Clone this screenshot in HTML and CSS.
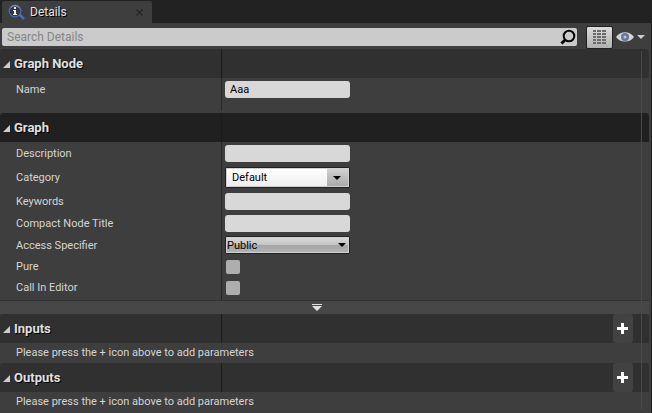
FILE: index.html
```html
<!DOCTYPE html>
<html lang="en">
<head>
  <meta charset="UTF-8">
  <meta name="viewport" content="width=device-width, initial-scale=1.0">
  <title>Details</title>
  <link rel="stylesheet" href="styles.css">
</head>
<body>

  <div class="tab-bar">
    <div class="tab">
      <svg class="tab-icon" width="18" height="18" viewBox="0 0 18 18">
        <path d="M11 11l5 5" stroke="#4a6cb8" stroke-width="2.500"/>
        <circle cx="7" cy="8" r="5.800" fill="#38383a" stroke="#4a6cb8" stroke-width="1.300"/>
        <path d="M2.500 5a5.500 5.500 0 0 1 9 0" fill="none" stroke="#8ea2d0"/>
        <path d="M6 4h2v2H6zM5 7h3v4h1v1H5v-1h1V8H5z" fill="#eee"/>
      </svg>
      <span class="tab-title">Details</span>
      <button class="tab-close" aria-label="Close tab">
        <svg width="7" height="7" viewBox="0 0 7 7"><path d="M.5.500l6 6M6.500.500l-6 6" stroke="#262626" stroke-width="1.300"/></svg>
      </button>
    </div>
  </div>

  <main class="panel">
    <div class="toolbar">
      <div class="search">
        <input type="text" id="search" placeholder="Search Details" aria-label="Search Details">
        <svg width="16" height="16" viewBox="0 0 16 16">
          <circle cx="9" cy="7" r="5.300" fill="none" stroke="#000" stroke-width="2"/>
          <path d="M5.500 10.500L1.500 14.500" stroke="#000" stroke-width="3"/>
        </svg>
      </div>
      <button class="grid-button" aria-label="Property matrix">
        <svg width="13" height="14" viewBox="0 0 13 14">
          <path d="M0 1h13M0 4h13M0 7h13M0 10h13M0 13h13" stroke="#6c6c6c" stroke-width="2" stroke-dasharray="3 1 4 1 4 1"/>
        </svg>
      </button>
      <button class="view-button" aria-label="View options">
        <svg width="30" height="12" viewBox="0 0 30 12">
          <path d="M0 6C4-.5 14-.5 18 6 14 12 4 12 0 6z" fill="#d4d4d4"/>
          <circle cx="9" cy="6" r="4" fill="#667799"/>
          <circle cx="9" cy="6" r="1.500" fill="#bcc8de"/>
          <path d="M21 4h8l-4 4z" fill="#ccc"/>
        </svg>
      </button>
    </div>

    <div class="details">
      <section>
        <h2 class="heading"><svg class="arrow" width="7" height="7"><path d="M7 0v7H0z"/></svg>Graph Node</h2>
        <div class="properties single">
          <div class="row"><label for="name">Name</label><input class="text" type="text" id="name" value="Aaa"></div>
        </div>
      </section>

      <section>
        <h2 class="heading dark"><svg class="arrow" width="7" height="7"><path d="M7 0v7H0z"/></svg>Graph</h2>
        <div class="properties">
          <div class="row"><label for="description">Description</label><input class="text" type="text" id="description"></div>
          <div class="row tall"><label for="category">Category</label>
            <div class="select combo">
              <select id="category"><option>Default</option></select>
              <svg width="8" height="4"><path d="M0 0h8L4 4z"/></svg>
            </div>
          </div>
          <div class="row"><label for="keywords">Keywords</label><input class="text" type="text" id="keywords"></div>
          <div class="row short"><label for="compact">Compact Node Title</label><input class="text" type="text" id="compact"></div>
          <div class="row medium"><label for="access">Access Specifier</label>
            <div class="select">
              <select id="access"><option>Public</option></select>
              <svg width="8" height="4"><path d="M0 0h8L4 4z"/></svg>
            </div>
          </div>
          <div class="row short check"><label for="pure">Pure</label><input type="checkbox" id="pure"></div>
          <div class="row short check"><label for="call">Call In Editor</label><input type="checkbox" id="call"></div>
        </div>
        <button class="advanced" aria-label="Show advanced">
          <svg width="10" height="7"><path d="M0 0h10v1H0zM0 2h10L5 7z" fill="#e0e0e0"/></svg>
        </button>
      </section>

      <section>
        <h2 class="heading"><svg class="arrow" width="7" height="7"><path d="M7 0v7H0z"/></svg>Inputs
          <button class="add" aria-label="Add input"><svg width="12" height="11"><path d="M4 0h3v4h4v3H7v4H4V7H0V4h4z" fill="#fff"/></svg></button>
        </h2>
        <p class="hint">Please press the + icon above to add parameters</p>
      </section>

      <section>
        <h2 class="heading"><svg class="arrow" width="7" height="7"><path d="M7 0v7H0z"/></svg>Outputs
          <button class="add" aria-label="Add output"><svg width="12" height="11"><path d="M4 0h3v4h4v3H7v4H4V7H0V4h4z" fill="#fff"/></svg></button>
        </h2>
        <p class="hint">Please press the + icon above to add parameters</p>
      </section>
    </div>
  </main>

</body>
</html>
```
FILE: styles.css
```css
* {
  box-sizing: border-box;
}
body {
  margin: 0;
  min-height: 100vh;
  display: flex;
  flex-direction: column;
  background-color: #222;
  color: #d4d4d4;
  font-family: Roboto, sans-serif;
  font-size: 11px;
}
button, input, select {
  font: inherit;
  margin: 0;
  padding: 0;
  border: none;
  outline: none;
}
button {
  background: none;
  display: flex;
  align-items: center;
  justify-content: center;
}
svg {
  display: block;
  flex: none;
}
.tab-bar {
  height: 23px;
  padding: 1px 2px 0;
}
.tab {
  display: flex;
  align-items: center;
  width: 150px;
  height: 22px;
  padding: 0 9px 0 6px;
  background-color: #3e3e3e;
  border-radius: 2px 2px 0 0;
}
.tab-title {
  margin-left: 4px;
  flex: 1;
  font-size: 12px;
  color: #e4e4e4;
  text-shadow: 1px 1px 0 #000;
}
.panel {
  flex: 1;
  margin-right: 1px;
  background-color: #3e3e3e;
}
.toolbar {
  display: flex;
  align-items: center;
  height: 26px;
  padding: 2px 5px 0 2px;
}
.search {
  display: flex;
  align-items: center;
  flex: 1;
  height: 18px;
  padding: 0 1px 0 5px;
  background-color: #cbcbcb;
  border-radius: 2px;
}
.search input {
  flex: 1;
  min-width: 0;
  background: none;
  font-size: 12px;
}
.search input::placeholder {
  color: #858585;
}
.grid-button {
  width: 27px;
  height: 23px;
  margin: 0 3px 0 9px;
  background: linear-gradient(#ddd, #b0b0b0);
  border: 1px solid #202020;
  border-radius: 2px;
}
.details {
  position: relative;
  padding-right: 2px;
}
/* scrollbar track */
.details::after {
  content: "";
  position: absolute;
  top: 2px;
  bottom: 2px;
  right: 9px;
  width: 1px;
  background-color: #494949;
}
.heading {
  display: flex;
  align-items: center;
  height: 29px;
  margin: 0;
  padding-left: 3px;
  background: linear-gradient(#1b1b1b, #1b1b1b) 221px 0 / 1px 100% no-repeat #303030;
  border-radius: 3px 3px 0 0;
  color: #e0e0e0;
  font-size: 13px;
  font-weight: bold;
  text-shadow: 1px 1px 0 #000;
}
.heading.dark {
  background-color: #202020;
}
.arrow {
  margin: 2px 4px 0 0;
  fill: #ccc;
}
.properties {
  background: linear-gradient(#282828, #282828) 221px 0 / 1px 100% no-repeat;
  padding-bottom: 2px;
}
.properties.single {
  height: 33px;
  margin-bottom: 2px;
}
.row {
  display: grid;
  grid-template-columns: 209px 125px;
  align-items: center;
  height: 23px;
  padding-left: 16px;
}
.row.tall {
  height: 25px;
}
.row.medium {
  height: 22px;
}
.row.short {
  height: 21px;
}
.text {
  width: 100%;
  height: 17px;
  padding: 0 5px;
  background-color: #d8d8d8;
  border-radius: 3px;
  color: #000;
}
.select {
  position: relative;
  height: 18px;
  border: 1px solid #222;
  border-radius: 2px;
  background: linear-gradient(#d8d8d8, #c4c4c4 50%, #a4a4a4 50%, #b4b4b4);
}
.select select {
  display: block;
  appearance: none;
  width: 100%;
  height: 100%;
  background: none;
  border: 1px solid #d0d0d0;
  color: #000;
}
.select svg {
  position: absolute;
  right: 3px;
  top: 6px;
  pointer-events: none;
}
.select.combo {
  height: 21px;
  background: linear-gradient(#d4d4d4, #a8a8a8);
}
.combo select {
  padding-left: 5px;
  background: linear-gradient(#fff, #eee) 0 0 / 100px 100% no-repeat;
}
.combo svg {
  right: 8px;
  top: 8px;
}
.check input {
  appearance: none;
  width: 14px;
  height: 14px;
  margin-left: 1px;
  background-color: #aeaeae;
  border-radius: 2px;
}
.advanced {
  width: 100%;
  height: 14px;
  padding-right: 15px;
  background-color: #474747;
  border-top: 1px solid #323232;
}
.add {
  width: 20px;
  height: 29px;
  margin: 0 16px 0 auto;
  background-color: #424242;
  border-radius: 3px;
}
.hint {
  margin: 0;
  padding-left: 16px;
  line-height: 20px;
}
```
